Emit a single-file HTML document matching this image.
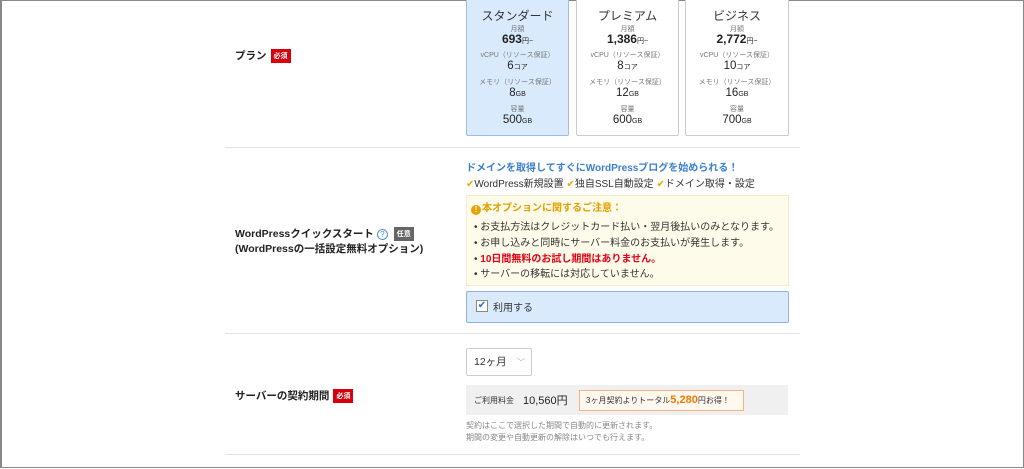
<!DOCTYPE html>
<html><head><meta charset="utf-8"><style>
*{margin:0;padding:0;box-sizing:border-box}
body{width:1024px;height:469px;background:#fff;font-family:"Liberation Sans","Noto Sans CJK JP",sans-serif;color:#333;position:relative;overflow:hidden}
.frame{position:absolute;left:0;top:0;width:1024px;height:468px;border:1px solid #888;border-left-width:2px}
.a{position:absolute;white-space:nowrap}
.hr{position:absolute;left:225px;width:575px;height:1px;background:#e3e3e3}
.lbl{font-size:10.5px;font-weight:bold;color:#222}
.req{display:inline-block;background:#d9000d;color:#fff;font-size:7px;padding:2px 3px;vertical-align:middle;margin-left:4px;font-weight:bold}
.card{position:absolute;top:-2px;height:138px;border:1px solid #ccc;border-radius:2px;text-align:center;background:#fff}
.card.sel{background:#d9eafc;border-color:#9ebfe4}
.card div{position:absolute;left:0;right:0}
.n{font-size:12px;color:#333}
.s{font-size:7px;color:#777}
.p{font-size:12px;font-weight:bold;color:#222}
.v{font-size:11.5px;color:#222}
.u{font-size:7px}
</style></head><body>
<div class="frame"></div>

<div class="a lbl" style="left:235px;top:48px">プラン<span class="req">必須</span></div>

<div class="card sel" style="left:466px;width:103px">
<div class="n" style="top:8px">スタンダード</div><div class="s" style="top:25px">月額</div>
<div class="p" style="top:33px">693<span class="u" style="font-weight:normal">円~</span></div>
<div class="s" style="top:51px">vCPU（リソース保証）</div><div class="v" style="top:61px">6<span class="u">コア</span></div>
<div class="s" style="top:78px">メモリ（リソース保証）</div><div class="v" style="top:88px">8<span class="u">GB</span></div>
<div class="s" style="top:105px">容量</div><div class="v" style="top:115px">500<span class="u">GB</span></div></div>

<div class="card" style="left:576px;width:103px">
<div class="n" style="top:8px">プレミアム</div><div class="s" style="top:25px">月額</div>
<div class="p" style="top:33px">1,386<span class="u" style="font-weight:normal">円~</span></div>
<div class="s" style="top:51px">vCPU（リソース保証）</div><div class="v" style="top:61px">8<span class="u">コア</span></div>
<div class="s" style="top:78px">メモリ（リソース保証）</div><div class="v" style="top:88px">12<span class="u">GB</span></div>
<div class="s" style="top:105px">容量</div><div class="v" style="top:115px">600<span class="u">GB</span></div></div>

<div class="card" style="left:685px;width:104px">
<div class="n" style="top:8px">ビジネス</div><div class="s" style="top:25px">月額</div>
<div class="p" style="top:33px">2,772<span class="u" style="font-weight:normal">円~</span></div>
<div class="s" style="top:51px">vCPU（リソース保証）</div><div class="v" style="top:61px">10<span class="u">コア</span></div>
<div class="s" style="top:78px">メモリ（リソース保証）</div><div class="v" style="top:88px">16<span class="u">GB</span></div>
<div class="s" style="top:105px">容量</div><div class="v" style="top:115px">700<span class="u">GB</span></div></div>

<div class="hr" style="top:147px"></div>

<div class="a lbl" style="left:235px;top:226px">WordPressクイックスタート <span style="display:inline-block;width:11px;height:11px;border:1px solid #4a90d9;border-radius:50%;color:#4a90d9;font-size:8px;text-align:center;line-height:9px;font-weight:normal;vertical-align:middle">?</span> <span style="display:inline-block;background:#666;color:#fff;font-size:7px;padding:2px 3px;vertical-align:middle;margin-left:3px">任意</span></div>
<div class="a lbl" style="left:235px;top:241px">(WordPressの一括設定無料オプション)</div>

<div class="a" style="left:466px;top:159px;font-size:10px;font-weight:bold;color:#3a7fcf">ドメインを取得してすぐにWordPressブログを始められる！</div>
<div class="a" style="left:466px;top:175px;font-size:10px;color:#333"><span style="color:#f0a500">✔</span>WordPress新規設置 <span style="color:#f0a500">✔</span>独自SSL自動設定 <span style="color:#f0a500">✔</span>ドメイン取得・設定</div>

<div class="a" style="left:466px;top:195px;width:323px;height:91px;background:#fffbea;border:1px solid #f4eccb"></div>
<div class="a" style="left:471px;top:203px;font-size:10px;font-weight:bold;color:#e0a000;line-height:12px"><span style="display:inline-block;width:10px;height:10px;border-radius:50%;background:#e8a200;color:#fff;font-size:8px;text-align:center;line-height:10px;vertical-align:-1px;margin-right:1px">!</span>本オプションに関するご注意：</div>
<div class="a" style="left:474px;top:218px;font-size:10px;color:#333">• お支払方法はクレジットカード払い・翌月後払いのみとなります。</div>
<div class="a" style="left:474px;top:234px;font-size:10px;color:#333">• お申し込みと同時にサーバー料金のお支払いが発生します。</div>
<div class="a" style="left:474px;top:250px;font-size:10px;color:#333">• <b style="color:#e60012">10日間無料のお試し期間はありません。</b></div>
<div class="a" style="left:474px;top:265px;font-size:10px;color:#333">• サーバーの移転には対応していません。</div>

<div class="a" style="left:466px;top:291px;width:323px;height:32px;background:#d9eafc;border:1px solid #8fb4de;border-radius:2px"></div>
<div class="a" style="left:476px;top:300px;width:12px;height:12px;border:1px solid #888;background:#fff;color:#2a6fc0;font-size:10px;line-height:10px;text-align:center">✔</div>
<div class="a" style="left:493px;top:299px;font-size:10px;color:#333">利用する</div>

<div class="hr" style="top:333px"></div>

<div class="a lbl" style="left:235px;top:388px">サーバーの契約期間<span class="req">必須</span></div>
<div class="a" style="left:466px;top:348px;width:66px;height:28px;border:1px solid #ccc;border-radius:2px;font-size:10.5px;line-height:26px;padding-left:7px">12ヶ月<span style="position:absolute;right:6px;top:1px;color:#aaa;font-size:8px">﹀</span></div>
<div class="a" style="left:466px;top:385px;width:322px;height:30px;background:#f0f0f0"></div>
<div class="a" style="left:474px;top:395px;font-size:8px;color:#333">ご利用料金</div>
<div class="a" style="left:523px;top:392px;font-size:11px;color:#222">10,560円</div>
<div class="a" style="left:579px;top:390px;width:165px;height:21px;border:1px solid #f6b37f;background:#fff8ef;font-size:8px;line-height:19px;padding-left:6px;color:#333">3ヶ月契約よりトータル<b style="color:#f07800;font-size:11px">5,280</b>円お得！</div>
<div class="a" style="left:466px;top:420px;font-size:8px;color:#888">契約はここで選択した期間で自動的に更新されます。</div>
<div class="a" style="left:466px;top:432px;font-size:8px;color:#888">期間の変更や自動更新の解除はいつでも行えます。</div>

<div class="hr" style="top:454px"></div>
</body></html>
